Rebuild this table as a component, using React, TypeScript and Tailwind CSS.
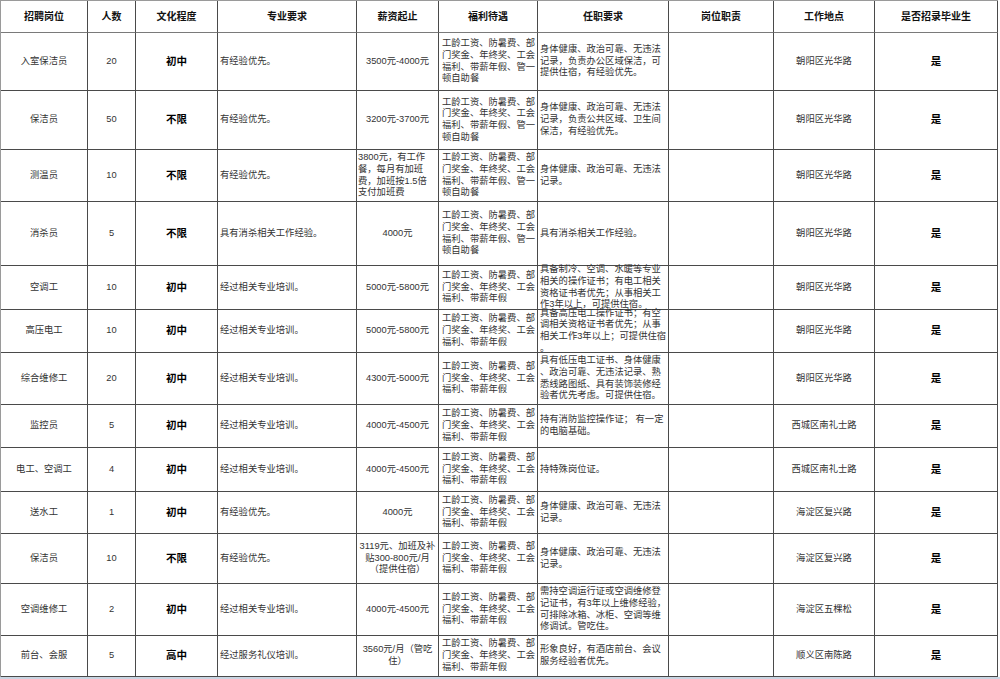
const headers = ['招聘岗位', '人数', '文化程度', '专业要求', '薪资起止', '福利待遇', '任职要求', '岗位职责', '工作地点', '是否招录毕业生'];

const welfare4 = ['工龄工资、防暑费、部', '门奖金、年终奖、工会', '福利、带薪年假、管一', '顿自助餐'];
const welfare3 = ['工龄工资、防暑费、部', '门奖金、年终奖、工会', '福利、带薪年假'];

type Row = {
  title: string;
  count: string;
  edu: string;
  major: string;
  salary: string[];
  salaryAlign?: 'left' | 'center';
  welfare: string[];
  req: string[];
  place: string;
};

const rows: Row[] = [
  { title: '入室保洁员', count: '20', edu: '初中', major: '有经验优先。', salary: ['3500元-4000元'], welfare: welfare4, req: ['身体健康、政治可靠、无违法', '记录，负责办公区域保洁，可', '提供住宿，有经验优先。'], place: '朝阳区光华路' },
  { title: '保洁员', count: '50', edu: '不限', major: '有经验优先。', salary: ['3200元-3700元'], welfare: welfare4, req: ['身体健康、政治可靠、无违法', '记录，负责公共区域、卫生间', '保洁，有经验优先。'], place: '朝阳区光华路' },
  { title: '测温员', count: '10', edu: '不限', major: '有经验优先。', salary: ['3800元，有工作', '餐，每月有加班', '费，加班按1.5倍', '支付加班费'], salaryAlign: 'left', welfare: welfare4, req: ['身体健康、政治可靠、无违法', '记录。'], place: '朝阳区光华路' },
  { title: '消杀员', count: '5', edu: '不限', major: '具有消杀相关工作经验。', salary: ['4000元'], welfare: welfare4, req: ['具有消杀相关工作经验。'], place: '朝阳区光华路' },
  { title: '空调工', count: '10', edu: '初中', major: '经过相关专业培训。', salary: ['5000元-5800元'], welfare: welfare3, req: ['具备制冷、空调、水暖等专业', '相关的操作证书；有电工相关', '资格证书者优先；从事相关工', '作3年以上，可提供住宿。'], place: '朝阳区光华路' },
  { title: '高压电工', count: '10', edu: '初中', major: '经过相关专业培训。', salary: ['5000元-5800元'], welfare: welfare3, req: ['具备高压电工操作证书；有空', '调相关资格证书者优先；从事', '相关工作3年以上；可提供住宿', '。'], place: '朝阳区光华路' },
  { title: '综合维修工', count: '20', edu: '初中', major: '经过相关专业培训。', salary: ['4300元-5000元'], welfare: welfare3, req: ['具有低压电工证书、身体健康', '、政治可靠、无违法记录、熟', '悉线路图纸、具有装饰装修经', '验者优先考虑。可提供住宿。'], place: '朝阳区光华路' },
  { title: '监控员', count: '5', edu: '初中', major: '经过相关专业培训。', salary: ['4000元-4500元'], welfare: welfare3, req: ['持有消防监控操作证； 有一定', '的电脑基础。'], place: '西城区南礼士路' },
  { title: '电工、空调工', count: '4', edu: '初中', major: '经过相关专业培训。', salary: ['4000元-4500元'], welfare: welfare3, req: ['持特殊岗位证。'], place: '西城区南礼士路' },
  { title: '送水工', count: '1', edu: '初中', major: '有经验优先。', salary: ['4000元'], welfare: welfare3, req: ['身体健康、政治可靠、无违法', '记录。'], place: '海淀区复兴路' },
  { title: '保洁员', count: '10', edu: '不限', major: '有经验优先。', salary: ['3119元、加班及补', '贴300-800元/月', '（提供住宿）'], welfare: welfare3, req: ['身体健康、政治可靠、无违法', '记录。'], place: '海淀区复兴路' },
  { title: '空调维修工', count: '2', edu: '初中', major: '经过相关专业培训。', salary: ['4000元-4500元'], welfare: welfare3, req: ['需持空调运行证或空调维修登', '记证书，有3年以上维修经验，', '可排除冰箱、冰柜、空调等维', '修调试。管吃住。'], place: '海淀区五棵松' },
  { title: '前台、会服', count: '5', edu: '高中', major: '经过服务礼仪培训。', salary: ['3560元/月（管吃', '住）'], welfare: welfare3, req: ['形象良好，有酒店前台、会议', '服务经验者优先。'], place: '顺义区南陈路' },
];

const cell = 'flex items-center border-r border-b border-[#4a4a4a] min-w-0';
const body = 'text-[9.3px] leading-[11.7px] text-[#333] whitespace-nowrap';

function Lines({ lines, className }: { lines: string[]; className?: string }) {
  return (
    <div className={className}>
      {lines.map((l, i) => (
        <div key={i}>{l}</div>
      ))}
    </div>
  );
}

export default function App() {
  return (
    <div className="w-[1000px] h-[679px] bg-white overflow-hidden font-['Liberation_Sans','Noto_Sans_CJK_SC',sans-serif]">
      <div className="grid w-[998px] grid-cols-[87px_48px_82px_139px_82px_99px_131px_105px_101px_123px] grid-rows-[32px_58px_59px_52px_64px_44px_43px_52px_43px_44px_42px_50px_52px_41px] border-l border-t border-l-[#9a9a9a] border-t-[#9a9a9a]">
        {headers.map((h) => (
          <div key={h} className={`${cell} justify-center border-b-[#7a7a7a] text-[10px] font-bold text-[#111] whitespace-nowrap`}>
            {h}
          </div>
        ))}
        {rows.map((r, i) => (
          <div key={i} className="contents">
            <div className={`${cell} justify-center ${body}`}>{r.title}</div>
            <div className={`${cell} justify-center ${body}`}>{r.count}</div>
            <div className={`${cell} justify-center text-[10.5px] font-bold text-black`}>{r.edu}</div>
            <div className={`${cell} pl-[2px] ${body}`}>{r.major}</div>
            <div className={`${cell} ${r.salaryAlign === 'left' ? 'pl-[1px]' : 'justify-center'}`}>
              <Lines lines={r.salary} className={`${body} ${r.salaryAlign === 'left' ? 'text-left' : 'text-center'}`} />
            </div>
            <div className={`${cell} pl-[3px]`}>
              <Lines lines={r.welfare} className={body} />
            </div>
            <div className={`${cell} pl-[2px]`}>
              <Lines lines={r.req} className={body} />
            </div>
            <div className={cell}></div>
            <div className={`${cell} justify-center ${body}`}>{r.place}</div>
            <div className={`${cell} justify-center text-[10.5px] font-bold text-black`}>是</div>
          </div>
        ))}
      </div>
      <div className="h-[3px] bg-[#c9d5e2]"></div>
    </div>
  );
}
